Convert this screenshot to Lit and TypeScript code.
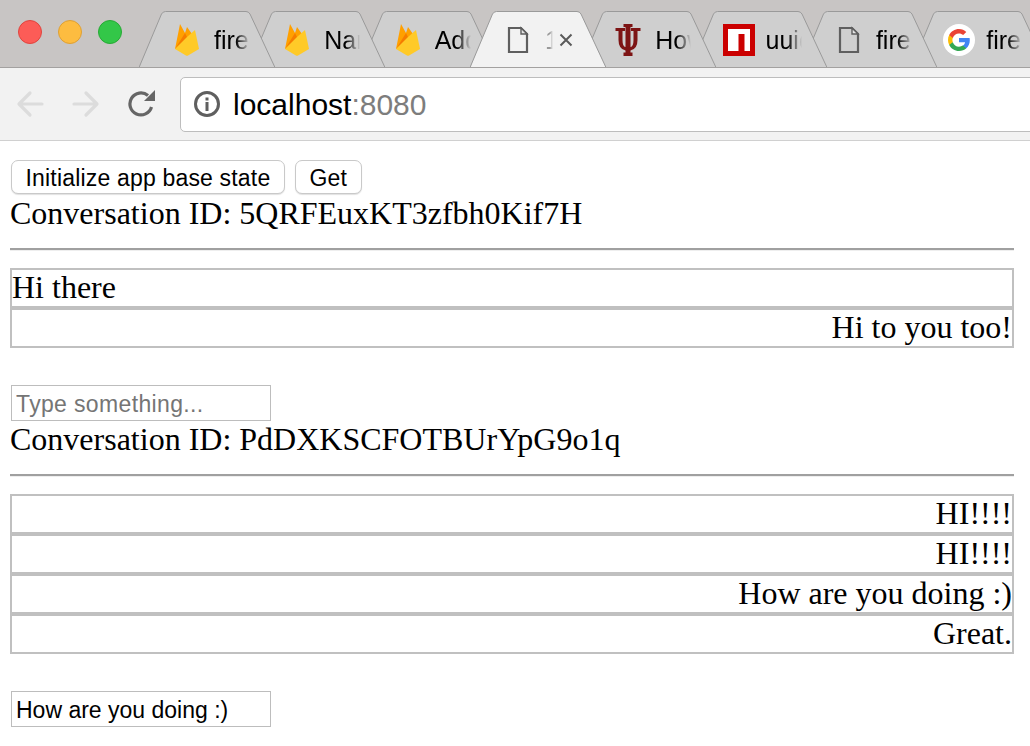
import { LitElement, html, css, svg } from "lit";
import { customElement } from "lit/decorators.js";

const flame = svg`<svg class="ico" viewBox="0 0 24 32"><path d="M0 25 L5 0 L10 9 L12 3 L17 10 L12 20 Z" fill="#ffa000"/><path d="M0 25 L10 9 L12.500 14 Z" fill="#f57c00"/><path d="M0 25 L12 13 L20 6 L24 25 L13 31.500 Q12 32 11 31.500 Z" fill="#ffca28"/></svg>`;
const page = svg`<svg class="ico" viewBox="0 0 32 32"><path d="M7 4 H19 L25 10 V28 H7 Z" fill="none" stroke="#5f5f5f" stroke-width="2.200"/><path d="M19 4 V10 H25 Z" fill="#e4e4e4" stroke="#5f5f5f" stroke-width="1.400"/></svg>`;
const trident = svg`<svg class="ico" viewBox="0 0 25 32"><path fill="#7d1414" d="M8 0H17V3H15V23Q18 22.500 18 16V7H15.500V4H25V7H22V16Q22 25 15 26.500V28.500H17V32H8V28.500H10V26.500Q3 25 3 16V7H0V4H9.500V7H7V16Q7 22.500 10 23V3H8Z"/></svg>`;
const npm = svg`<svg class="ico" viewBox="0 0 32 32"><rect width="32" height="32" fill="#cb0000"/><rect x="5" y="5" width="22" height="22" fill="#fff"/><rect x="15.500" y="10" width="6" height="17" fill="#cb0000"/></svg>`;
const google = svg`<svg class="ico" viewBox="0 0 32 32"><circle cx="16" cy="16" r="16" fill="#fff"/><path d="M26.800 16.300c0-.8-.1-1.500-.2-2.200H16v4.200h6.100c-.3 1.400-1 2.500-2.200 3.300v2.700h3.500c2.100-1.900 3.400-4.700 3.400-8z" fill="#4285f4"/><path d="M16 27c2.900 0 5.400-1 7.300-2.700l-3.500-2.700c-1 .7-2.300 1.100-3.800 1.100-2.900 0-5.300-1.900-6.200-4.500H6.200v2.800C8 24.600 11.700 27 16 27z" fill="#34a853"/><path d="M9.800 18.100c-.2-.7-.4-1.400-.4-2.100s.1-1.400.4-2.100v-2.800H6.200C5.400 12.500 5 14.200 5 16s.4 3.500 1.200 4.900z" fill="#fbbc05"/><path d="M16 9.400c1.600 0 3.100.6 4.200 1.600l3.100-3.100C21.400 6.100 18.900 5 16 5 11.700 5 8 7.400 6.200 11.100l3.600 2.800c.9-2.600 3.300-4.500 6.200-4.500z" fill="#ea4335"/></svg>`;

type Tab = { icon: unknown; label: string; active?: boolean };
const tabs: Tab[] = [
  { icon: flame, label: "fire" },
  { icon: flame, label: "Nar" },
  { icon: flame, label: "Add" },
  { icon: page, label: "1", active: true },
  { icon: trident, label: "How" },
  { icon: npm, label: "uuid" },
  { icon: page, label: "fire" },
  { icon: google, label: "fire" },
];

@customElement("app-root")
export class AppRoot extends LitElement {
  static styles = css`
    :host { display: block; width: 1030px; height: 746px; overflow: hidden; background: #fff; color: #000; font-family: "Liberation Serif", serif; }
    .strip { height: 67px; background: #c8c5c4; border-bottom: 1px solid #a3a1a0; display: flex; overflow: hidden; }
    .lights { width: 139px; flex: none; display: flex; gap: 16px; padding: 20px 0 0 18px; box-sizing: border-box; }
    .light { width: 24px; height: 24px; border-radius: 50%; box-sizing: border-box; border: 1px solid; }
    .red { background: #fc5c57; border-color: #e0443e; }
    .yellow { background: #fdbc40; border-color: #dea034; }
    .green { background: #33c748; border-color: #27aa35; }
    .tabs { display: flex; flex: none; }
    .tab { position: relative; width: 136px; height: 67px; flex: none; margin-right: -25.700px; }
    .tab .shape { position: absolute; inset: 0; width: 136px; height: 68px; }
    .tab .content { position: relative; display: flex; align-items: center; height: 32px; margin-top: 24px; padding-left: 32px; gap: 11px; }
    .ico { width: 32px; height: 32px; flex: none; display: block; }
    .text { font: 25px "Liberation Sans", sans-serif; color: #000; white-space: nowrap; width: 36px; overflow: hidden;
      -webkit-mask-image: linear-gradient(to right, #000 60%, transparent 100%); mask-image: linear-gradient(to right, #000 60%, transparent 100%); }
    .tab.active .text { color: #999; width: 8px; }
    .close { width: 14px; height: 14px; flex: none; margin-left: -5px; }
    .close svg { display: block; }
    .toolbar { height: 72px; background: #f2f2f2; border-bottom: 1px solid #d0d0d0; display: flex; align-items: center; padding-left: 16px; gap: 28px; }
    .nav { width: 28px; height: 28px; flex: none; display: block; }
    .omni { margin-left: -4px; flex: 1; height: 53px; margin-right: -8px; background: #fff; border: 1px solid #bdbdbd; border-radius: 5px; display: flex; align-items: center; padding-left: 12px; gap: 12px; font: 30px "Liberation Sans", sans-serif; }
    .omni svg { width: 28px; height: 28px; flex: none; }
    .addr { margin-top: 2px; }
    .host { color: #000; }
    .port { color: #7d7d7d; }
    .page { padding: 19px 16px 0 10px; }
    .buttons { display: flex; gap: 10px; padding-left: 1px; height: 35px; }
    button { height: 34px; box-sizing: border-box; padding: 2px 13.500px 0; background: #fff; border: 1px solid #c9c9c9; border-radius: 7px; box-shadow: 0 1px 1px rgba(0,0,0,.12); font: 23px "Liberation Sans", sans-serif; color: #000; letter-spacing: .18px; }
    .cid { font-size: 32px; line-height: 36px; height: 36px; white-space: nowrap; }
    .rule { height: 3px; box-sizing: border-box; margin-top: 17px; border-top: 2px solid #a0a0a0; border-bottom: 1px solid #eee; }
    .list { margin-top: 17px; }
    .row { box-sizing: border-box; height: 40px; border: 2px solid #c0c0c0; font-size: 32px; line-height: 35px; white-space: nowrap; }
    .row.me { text-align: right; }
    input { display: block; box-sizing: border-box; width: 260px; height: 36px; margin: 37px 0 0 1px; padding: 3px 4px 0; border: 1px solid #bdbdbd; background: #fff; font: 23px "Liberation Sans", sans-serif; color: #000; outline: none; border-radius: 0; }
    input::placeholder { color: #757575; opacity: 1; letter-spacing: .35px; }
  `;

  renderTab(t: Tab, i: number) {
    const z = t.active ? 20 : 10 - i;
    const fill = t.active ? "#f2f2f2" : "#cfcfcf";
    return html`<div class="tab ${t.active ? "active" : ""}" style="z-index:${z}">
      <svg class="shape" viewBox="0 0 136 68">
        <path d="M0 68 L22.500 14 Q24 11.500 26.500 11.500 H107 Q109.500 11.500 111 14 L136 68 Z" fill=${fill}/>
        <path d="M0 67.500 L22.500 14 Q24 11.500 26.500 11.500 H107 Q109.500 11.500 111 14 L136 67.500" fill="none" stroke="#9a9a9a" stroke-width="1"/>
      </svg>
      <div class="content">
        ${t.icon}
        <span class="text">${t.label}</span>
        ${t.active
          ? html`<span class="close"><svg width="14" height="14" viewBox="0 0 14 14"><path d="M1.500 1.500 L12.500 12.500 M12.500 1.500 L1.500 12.500" stroke="#5a5a5a" stroke-width="2" fill="none"/></svg></span>`
          : ""}
      </div>
    </div>`;
  }

  renderConversation(id: string, rows: { t: string; me?: boolean }[], placeholder: string, value: string) {
    return html`
      <div class="cid">Conversation ID: ${id}</div>
      <div class="rule"></div>
      <div class="list">${rows.map((r) => html`<div class="row ${r.me ? "me" : ""}">${r.t}</div>`)}</div>
      <input placeholder=${placeholder} .value=${value} />
    `;
  }

  render() {
    return html`
      <div class="strip">
        <div class="lights">
          <span class="light red"></span><span class="light yellow"></span><span class="light green"></span>
        </div>
        <div class="tabs">${tabs.map((t, i) => this.renderTab(t, i))}</div>
      </div>
      <div class="toolbar">
        <svg class="nav" viewBox="0 0 28 28"><path d="M26 14 H4 M14 3 L3 14 L14 25" fill="none" stroke="#dcdcdc" stroke-width="3.200" stroke-linecap="round" stroke-linejoin="round"/></svg>
        <svg class="nav" viewBox="0 0 28 28"><path d="M2 14 H24 M14 3 L25 14 L14 25" fill="none" stroke="#dcdcdc" stroke-width="3.200" stroke-linecap="round" stroke-linejoin="round"/></svg>
        <svg class="nav" viewBox="0 0 28 28"><path d="M23.500 17 A11 11 0 1 1 20 5.500" fill="none" stroke="#666" stroke-width="3.200"/><path d="M16 11 L27 11 L27 0 Z" fill="#666"/></svg>
        <div class="omni">
          <svg viewBox="0 0 28 28"><circle cx="14" cy="14" r="11.500" fill="none" stroke="#5f5f5f" stroke-width="3"/><rect x="12.500" y="12" width="3" height="9" fill="#5f5f5f"/><rect x="12.500" y="7.500" width="3" height="3" fill="#5f5f5f"/></svg>
          <span class="addr"><span class="host">localhost</span><span class="port">:8080</span></span>
        </div>
      </div>
      <div class="page">
        <div class="buttons"><button>Initialize app base state</button><button>Get</button></div>
        ${this.renderConversation("5QRFEuxKT3zfbh0Kif7H", [{ t: "Hi there" }, { t: "Hi to you too!", me: true }], "Type something...", "")}
        ${this.renderConversation("PdDXKSCFOTBUrYpG9o1q", [
          { t: "HI!!!!", me: true },
          { t: "HI!!!!", me: true },
          { t: "How are you doing :)", me: true },
          { t: "Great.", me: true },
        ], "", "How are you doing :)")}
      </div>
    `;
  }
}
